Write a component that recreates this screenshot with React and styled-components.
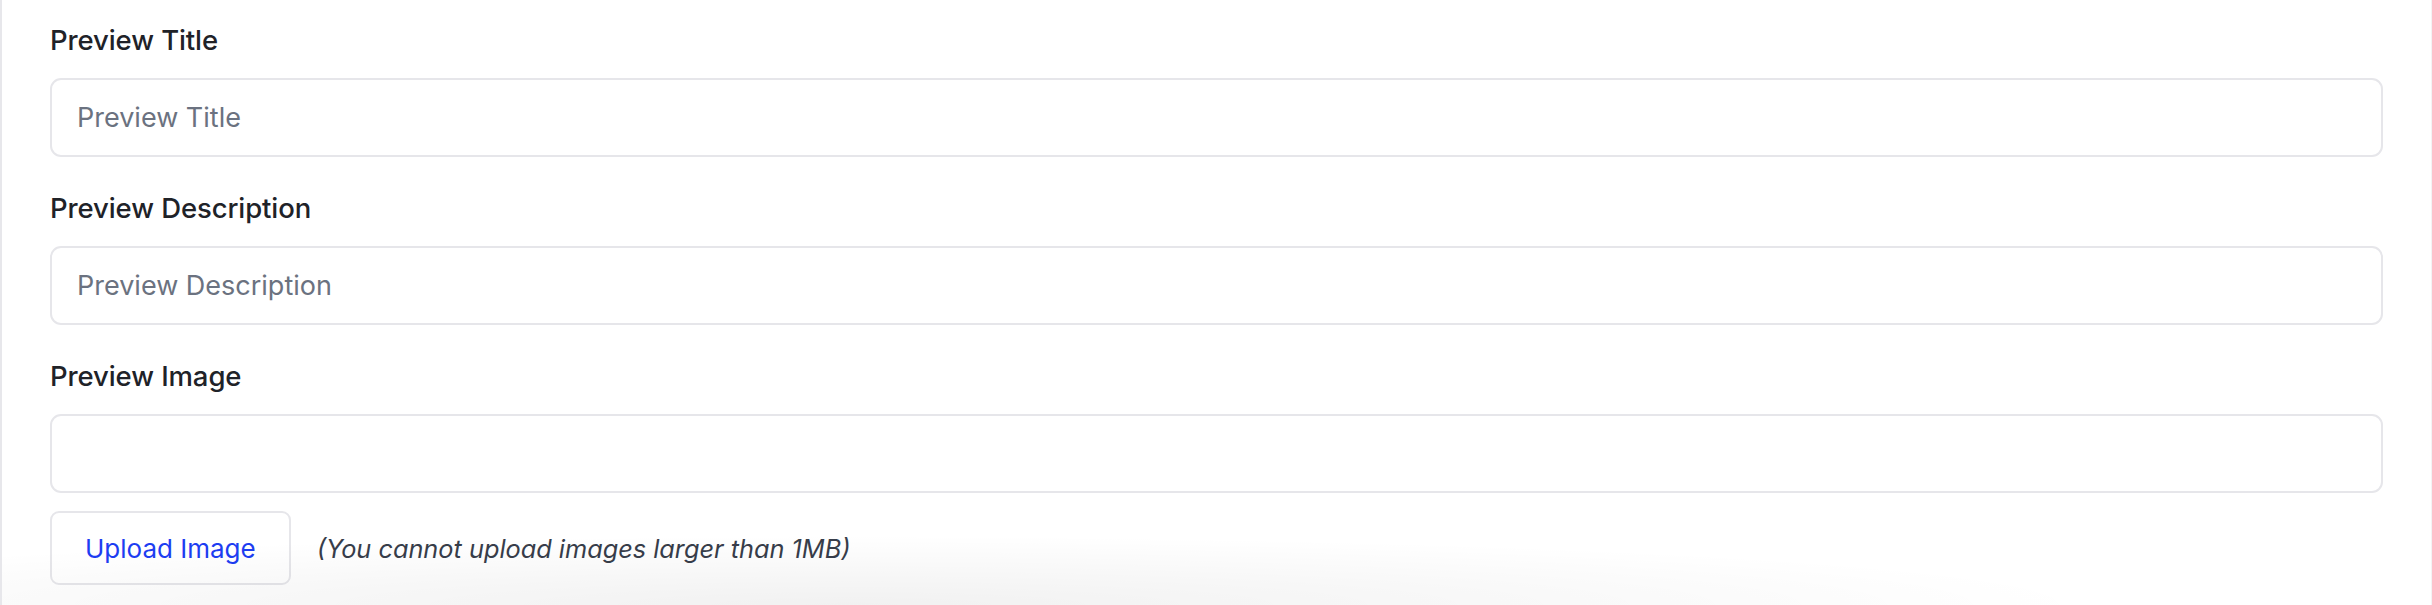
import styled, { createGlobalStyle } from 'styled-components';

const GlobalStyle = createGlobalStyle`
  html, body {
    margin: 0;
    background: #ffffff;
  }
  body {
    font-family: Inter, "Noto Sans", "Liberation Sans", sans-serif;
  }
`;

const Page = styled.div`
  position: relative;
  box-sizing: border-box;
  min-height: 605px;
  overflow: hidden;
  border-left: 2px solid #e7e7eb;
  border-right: 1px solid #f3f3f5;
  padding: 21px 48px 0 48px;
`;

const Form = styled.form`
  display: flex;
  flex-direction: column;
  gap: 32px;
`;

const Field = styled.div`
  display: flex;
  flex-direction: column;
  gap: 18px;
`;

const Label = styled.label`
  font-size: 27.5px;
  line-height: 39px;
  font-weight: 500;
  letter-spacing: -0.1px;
  color: #202228;
`;

const Input = styled.input`
  box-sizing: border-box;
  width: 100%;
  height: 79px;
  padding: 0 25px;
  border: 2px solid #e6e6ea;
  border-radius: 11px;
  background: #ffffff;
  font-family: inherit;
  font-size: 27px;
  color: #1b1d21;
  outline: none;

  &::placeholder {
    color: #6b7280;
  }
`;

const UploadRow = styled.div`
  display: flex;
  align-items: center;
  gap: 26px;
  margin-top: -14px;
`;

const UploadButton = styled.button`
  box-sizing: border-box;
  height: 74px;
  padding: 0 33px;
  border: 2px solid #e6e6ea;
  border-radius: 9px;
  background: #ffffff;
  font-family: inherit;
  font-size: 26px;
  color: #1d3df2;
  cursor: pointer;
`;

const Hint = styled.span`
  font-size: 25.3px;
  font-style: italic;
  color: #373d4a;
`;

const BottomShade = styled.div`
  position: absolute;
  left: 0;
  right: 0;
  bottom: 0;
  height: 70px;
  pointer-events: none;
  background: radial-gradient(
    ellipse 1250px 70px at 850px 100%,
    rgba(0, 0, 0, 0.055) 0%,
    rgba(0, 0, 0, 0.03) 45%,
    rgba(0, 0, 0, 0) 100%
  );
`;

const fields = [
  { id: 'title', label: 'Preview Title', placeholder: 'Preview Title' },
  { id: 'description', label: 'Preview Description', placeholder: 'Preview Description' },
];

export default function App() {
  return (
    <>
      <GlobalStyle />
      <Page>
        <Form onSubmit={(e) => e.preventDefault()}>
          {fields.map((f) => (
            <Field key={f.id}>
              <Label htmlFor={f.id}>{f.label}</Label>
              <Input id={f.id} placeholder={f.placeholder} />
            </Field>
          ))}
          <Field>
            <Label htmlFor="image">Preview Image</Label>
            <Input id="image" />
          </Field>
          <UploadRow>
            <UploadButton type="button">Upload Image</UploadButton>
            <Hint>(You cannot upload images larger than 1MB)</Hint>
          </UploadRow>
        </Form>
        <BottomShade />
      </Page>
    </>
  );
}
